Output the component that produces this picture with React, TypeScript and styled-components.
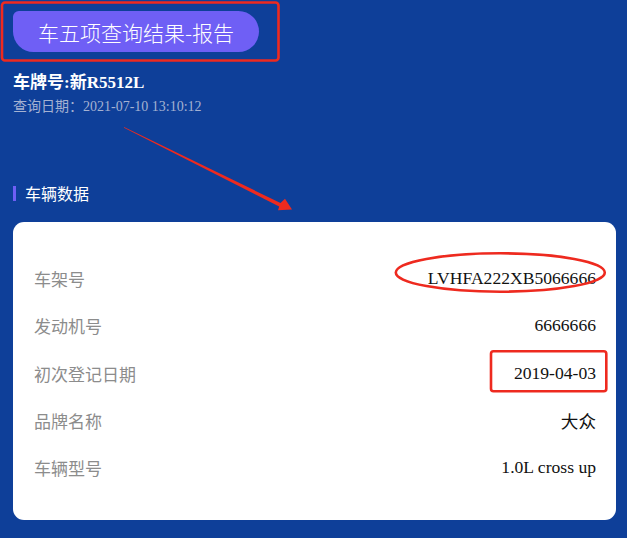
import React from "react";
import styled, { createGlobalStyle } from "styled-components";

const GlobalStyle = createGlobalStyle`
  html, body {
    margin: 0;
    padding: 0;
    background: #0e3f99;
  }
  * { box-sizing: border-box; }
`;

const Page = styled.div`
  position: relative;
  width: 627px;
  height: 538px;
  overflow: hidden;
  background: #0e3f99;
  padding: 11px 11px 0 13px;
  font-family: "Liberation Serif", "Noto Sans CJK SC", serif;
`;

const TitleButton = styled.div`
  display: inline-flex;
  align-items: center;
  justify-content: center;
  width: 246px;
  height: 41px;
  border-radius: 6px 21px 21px 21px;
  background: #6f5ff5;
  color: #ffffff;
  font-family: "Noto Sans CJK SC", sans-serif;
  font-size: 21px;
  font-weight: 300;
`;

const Plate = styled.div`
  margin-top: 19px;
  color: #ffffff;
  font-size: 17px;
  font-weight: 700;
  line-height: 24px;
  font-family: "Liberation Serif", "Noto Sans CJK SC", serif;
`;

const QueryDate = styled.div`
  margin-top: 2px;
  color: #a5b2d2;
  font-size: 14px;
  line-height: 20px;
  font-family: "Liberation Serif", "Noto Sans CJK SC", serif;
`;

const SectionTitle = styled.div`
  display: flex;
  align-items: center;
  gap: 9px;
  margin-top: 66px;
  height: 20px;
  color: #ffffff;
  font-family: "Noto Sans CJK SC", sans-serif;
  font-size: 16px;
  &::before {
    content: "";
    display: block;
    width: 3px;
    height: 15px;
    background: #6f5ff5;
  }
`;

const Card = styled.div`
  margin-top: 19px;
  background: #ffffff;
  border-radius: 11px;
  padding: 33px 20px 29px 21px;
`;

const Row = styled.div`
  display: flex;
  align-items: center;
  justify-content: space-between;
  height: 47.3px;
`;

const Label = styled.span`
  color: #8c8c8c;
  font-family: "Noto Sans CJK SC", sans-serif;
  font-size: 17px;
`;

const Value = styled.span`
  color: #111111;
  font-family: "Liberation Serif", "Noto Sans CJK SC", serif;
  font-size: 17.6px;
`;

const Overlay = styled.svg`
  position: absolute;
  left: 0;
  top: 0;
  pointer-events: none;
`;

const rows: [string, string][] = [
  ["车架号", "LVHFA222XB5066666"],
  ["发动机号", "6666666"],
  ["初次登记日期", "2019-04-03"],
  ["品牌名称", "大众"],
  ["车辆型号", "1.0L cross up"],
];

export default function App() {
  return (
    <>
      <GlobalStyle />
      <Page>
        <TitleButton>车五项查询结果-报告</TitleButton>
        <Plate>车牌号:新R5512L</Plate>
        <QueryDate>查询日期：2021-07-10 13:10:12</QueryDate>
        <SectionTitle>车辆数据</SectionTitle>
        <Card>
          {rows.map(([k, v]) => (
            <Row key={k}>
              <Label>{k}</Label>
              <Value>{v}</Value>
            </Row>
          ))}
        </Card>
        <Overlay width="627" height="538" viewBox="0 0 627 538">
          <rect x="2" y="2.5" width="276.5" height="58" rx="3" fill="none" stroke="#ee2a1f" strokeWidth="2.6" />
          <polygon
            points="124,127 280.5,203 285,198.8 292,209.6 278,210.2 279.2,206.4 124,127.8"
            fill="#ee2a1f"
          />
          <ellipse cx="500.3" cy="272.5" rx="104.5" ry="19.2" fill="none" stroke="#ee2a1f" strokeWidth="2.6" />
          <rect x="491" y="351.3" width="115.3" height="40" rx="2.5" fill="none" stroke="#ee2a1f" strokeWidth="2.6" />
        </Overlay>
      </Page>
    </>
  );
}
